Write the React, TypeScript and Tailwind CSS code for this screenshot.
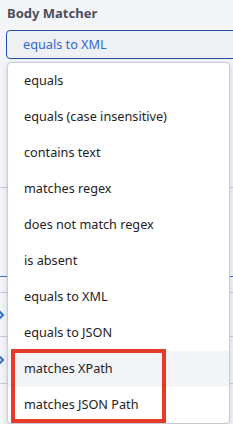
const options = [
  'equals',
  'equals (case insensitive)',
  'contains text',
  'matches regex',
  'does not match regex',
  'is absent',
  'equals to XML',
  'equals to JSON',
  'matches XPath',
  'matches JSON Path',
];

function Chevron() {
  return (
    <svg width="12" height="16" viewBox="0 0 12 16" className="text-[#2f6fd6]">
      <path d="M3 2 L9 8 L3 14" fill="none" stroke="currentColor" strokeWidth="2" />
    </svg>
  );
}

export default function App() {
  return (
    <div className="relative w-[233px] h-[424px] overflow-hidden bg-[#f4f5f8] font-['Noto_Sans',_'Open_Sans',_sans-serif]">
      {/* Form field */}
      <div className="pl-[6px] pt-[3px]">
        <div className="pl-[1px] text-[13px] leading-[20px] font-bold text-[#4a4f5c]">Body Matcher</div>
        <div className="mt-[7px] w-[240px] h-[29px] border border-[#1f4f9e] rounded-[4px] bg-[#eef0f4] flex items-center pl-[16px] text-[12.7px] text-[#2f6bd0]">
          equals to XML
        </div>
      </div>

      {/* Background table, mostly hidden */}
      <div className="mt-[36px] flex flex-col">
        <div className="h-[93px] border-b border-[#c9ccd4]" />
        <div className="h-[89px] border-b border-[#3b6fc9]" />
        <div className="h-[16px] border-b border-[#c9ccd4]" />
        <div className="h-[44px] border-b border-[#c9ccd4] flex items-center -ml-[6px]">
          <Chevron />
        </div>
        <div className="h-[47px] border-b border-[#c9ccd4] flex items-center -ml-[6px]">
          <Chevron />
        </div>
      </div>

      {/* Dropdown menu */}
      <div className="absolute left-[7px] top-[62px] w-[223px] bg-white border border-[#c7cbd5] rounded-[4px] shadow-[0_2px_6px_rgba(0,0,0,0.15)] overflow-hidden">
        {options.map((o) => (
          <div
            key={o}
            className={`h-[36px] flex items-center pl-[16px] text-[12.7px] text-[#1f2226] ${
              o === 'matches XPath' ? 'bg-[#f3f4f8]' : ''
            }`}
          >
            {o}
          </div>
        ))}
      </div>

      {/* Annotation box */}
      <div className="absolute left-[11px] top-[349px] w-[155px] h-[74px] border-4 border-[#e63b27]" />
    </div>
  );
}
